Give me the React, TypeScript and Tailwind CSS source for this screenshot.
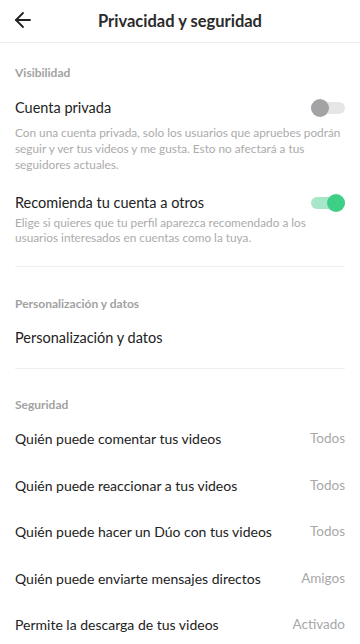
import { ArrowLeft } from 'lucide-react';

function Toggle({ on }: { on: boolean }) {
  return (
    <div className="relative w-[34px] h-[18px] shrink-0">
      <div
        className={
          'absolute left-0 right-0 top-[3px] h-[12px] rounded-full ' +
          (on ? 'bg-[#a8e6c9]' : 'bg-[#e6e6e6]')
        }
      />
      <div
        className={
          'absolute top-0 w-[18px] h-[18px] rounded-full ' +
          (on ? 'right-0 bg-[#3ccf85]' : 'left-0 bg-[#a3a3a6]')
        }
      />
    </div>
  );
}

const rows = [
  { label: 'Quién puede comentar tus videos', value: 'Todos' },
  { label: 'Quién puede reaccionar a tus videos', value: 'Todos' },
  { label: 'Quién puede hacer un Dúo con tus videos', value: 'Todos' },
  { label: 'Quién puede enviarte mensajes directos', value: 'Amigos' },
  { label: 'Permite la descarga de tus videos', value: 'Activado' },
];

export default function App() {
  return (
    <div className="w-[360px] h-[644px] overflow-hidden bg-white text-[#222] font-['Lato',sans-serif]">
      {/* Header */}
      <div className="relative h-[43px] flex items-center justify-center border-b border-[#ececec]">
        <ArrowLeft size={24} strokeWidth={1.8} className="absolute left-[11px] top-[8px] text-[#222]" />
        <h1 className="text-[16.5px] font-bold text-[#2b2b2b]">Privacidad y seguridad</h1>
      </div>

      <div className="px-[15px]">
        {/* Visibilidad */}
        <div className="pt-[21px] text-[12px] font-bold text-[#a2a2a2]">Visibilidad</div>

        <div className="pt-[15px] flex items-center justify-between">
          <span className="text-[14.5px]">Cuenta privada</span>
          <Toggle on={false} />
        </div>
        <p className="mt-[6px] text-[11.8px] leading-[16px] text-[#ababab]">
          Con una cuenta privada, solo los usuarios que apruebes podrán seguir y ver tus videos y me gusta. Esto no afectará a tus seguidores actuales.
        </p>

        <div className="pt-[19px] flex items-center justify-between">
          <span className="text-[14.5px]">Recomienda tu cuenta a otros</span>
          <Toggle on={true} />
        </div>
        <p className="mt-[1px] text-[11.8px] leading-[15.5px] text-[#ababab]">
          Elige si quieres que tu perfil aparezca recomendado a los usuarios interesados en cuentas como la tuya.
        </p>

        <div className="mt-[20px] border-t border-[#efefef]" />

        {/* Personalización */}
        <div className="pt-[28px] text-[12px] font-bold text-[#a2a2a2]">Personalización y datos</div>
        <div className="pt-[14px] pb-[20px] text-[14.5px]">Personalización y datos</div>
        <div className="border-t border-[#efefef]" />

        {/* Seguridad */}
        <div className="pt-[27px] text-[12px] font-bold text-[#a2a2a2]">Seguridad</div>
        <div className="pt-[1px]">
          {rows.map((r) => (
            <div key={r.label} className="h-[46.5px] flex items-center justify-between">
              <span className="text-[14px]">{r.label}</span>
              <span className="text-[13.5px] text-[#a8a8a8]">{r.value}</span>
            </div>
          ))}
        </div>
      </div>
    </div>
  );
}
